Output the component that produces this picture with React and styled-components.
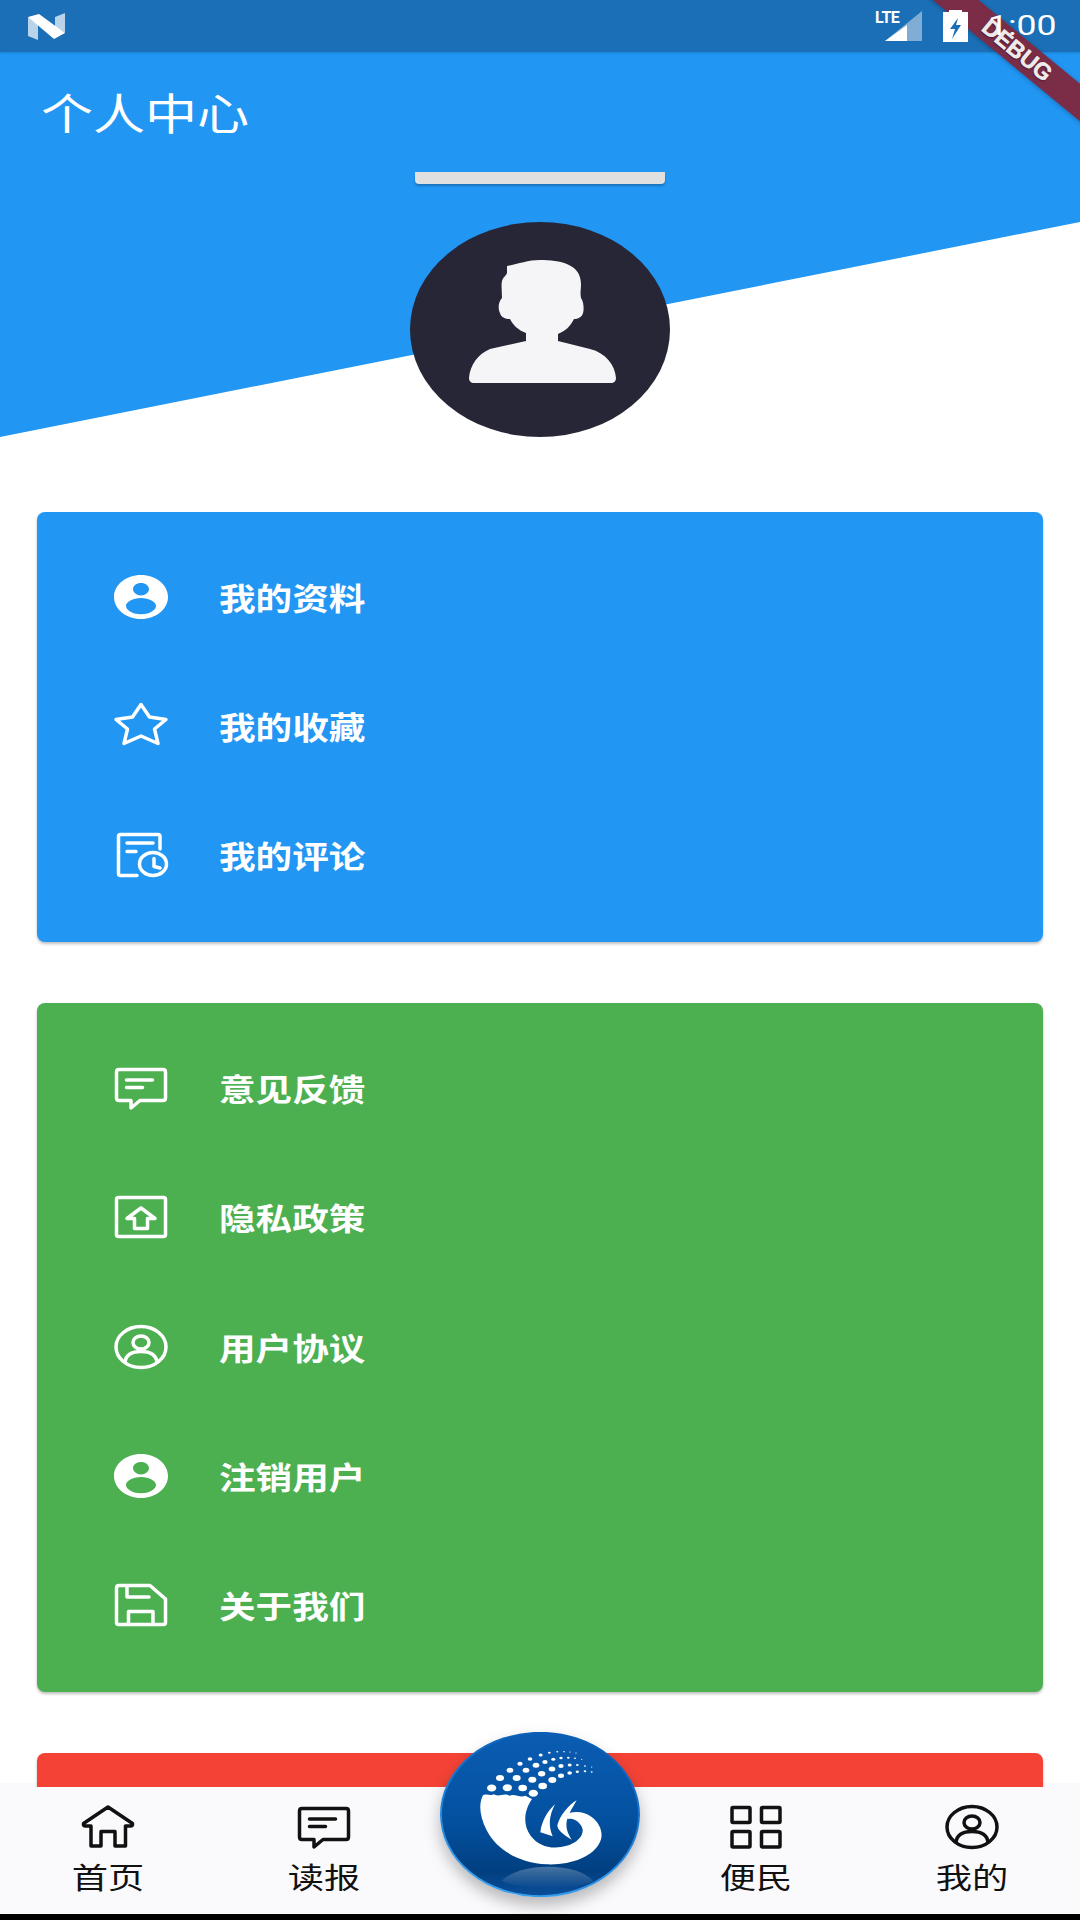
import styled, { createGlobalStyle } from "styled-components";

const CJK = `"Noto Sans CJK SC", "Noto Sans", sans-serif`;

const blueRows = [
  { title: "我的资料", icon: <UserFilled /> },
  { title: "我的收藏", icon: <StarOutline /> },
  { title: "我的评论", icon: <RecordClock /> },
];

const greenRows = [
  { title: "意见反馈", icon: <ChatBox /> },
  { title: "隐私政策", icon: <UploadBox /> },
  { title: "用户协议", icon: <UserOutline /> },
  { title: "注销用户", icon: <UserFilled /> },
  { title: "关于我们", icon: <SaveBox /> },
];

const dotRows = [
  [[215, 233, 14], [262, 232, 14], [308, 233, 13], [340, 249, 14], [368, 227, 13], [397, 209, 12], [423, 196, 9], [449, 188, 7], [472, 184, 5], [495, 183, 4], [515, 185, 3]],
  [[240, 203, 12], [290, 203, 12], [337, 208, 12], [365, 190, 11], [396, 176, 10], [423, 167, 8], [449, 164, 6], [472, 164, 4], [495, 167, 3], [515, 170, 2]],
  [[270, 180, 10], [318, 180, 10], [348, 165, 10], [375, 155, 8], [400, 147, 6], [423, 143, 5], [445, 142, 4], [465, 144, 3], [485, 147, 2]],
  [[300, 160, 8], [330, 146, 7], [362, 134, 6], [388, 127, 4], [412, 124, 3], [432, 124, 2.5], [450, 125, 2], [468, 128, 2]],
];

export default function App() {
  return (
    <Screen>
      <GlobalStyle />
      <Hero>
        <StatusBar>
          <DebugRibbon>
            <span>DEBUG</span>
          </DebugRibbon>
          <NougatLogo />
          <StatusRight>
            <Signal>
              <LteText>LTE</LteText>
              <SignalIcon />
            </Signal>
            <BatteryIcon />
            <Clock>1:00</Clock>
          </StatusRight>
        </StatusBar>
        <TitleRow>
          <Title>个人中心</Title>
        </TitleRow>
        <NameBar />
        <Avatar>
          <Silhouette />
        </Avatar>
      </Hero>

      <Main>
        <Card $color="#2196f3">
          {blueRows.map((row) => (
            <MenuRow key={row.title}>
              {row.icon}
              <MenuText>{row.title}</MenuText>
            </MenuRow>
          ))}
        </Card>
        <Card $color="#4caf50">
          {greenRows.map((row) => (
            <MenuRow key={row.title}>
              {row.icon}
              <MenuText>{row.title}</MenuText>
            </MenuRow>
          ))}
        </Card>
        <Card $color="#f44336" />
      </Main>

      <BottomNav>
        <NavItem>
          <HomeIcon />
          <NavText>首页</NavText>
        </NavItem>
        <NavItem>
          <ChatBox />
          <NavText>读报</NavText>
        </NavItem>
        <span />
        <NavItem>
          <GridIcon />
          <NavText>便民</NavText>
        </NavItem>
        <NavItem>
          <UserOutline />
          <NavText>我的</NavText>
        </NavItem>
      </BottomNav>
      <BlackEdge />

      <LogoButton>
        <PaperLogo />
      </LogoButton>
    </Screen>
  );
}

function Glyph({ children }) {
  return (
    <IconSvg viewBox="0 0 54 44" fill="none" stroke="currentColor" strokeWidth="3.5" strokeLinecap="round" strokeLinejoin="round">
      {children}
    </IconSvg>
  );
}

function UserFilled() {
  return (
    <IconSvg viewBox="0 0 54 44">
      <path
        fill="currentColor"
        fillRule="evenodd"
        d="M27 0C42 0 54 10 54 22S42 44 27 44 0 34 0 22 12 0 27 0ZM27 8C22.600 8 19 10.700 19 14S22.600 20.500 27 20.500 35 17.300 35 14 31.400 8 27 8ZM27 23C18.700 23 12 26.700 12 31.300 12 34 17 39.300 27 39.300S42 34 42 31.300C42 26.700 35.300 23 27 23Z"
      />
    </IconSvg>
  );
}

function StarOutline() {
  return (
    <Glyph>
      <path d="M27 0.500 35.500 13 52 15.500 40.500 25 44 39.500 27 32 10 39.500 13.500 25 2 15.500 18.500 13Z" />
    </Glyph>
  );
}

function RecordClock() {
  return (
    <Glyph>
      <path d="M23 42.500H6.500Q4.500 42.500 4.500 40.500V3.500Q4.500 1.500 6.500 1.500H44Q46 1.500 46 3.500V16" />
      <path d="M13 10H39M13 18.500H22" />
      <ellipse cx="39" cy="31" rx="13.500" ry="11.500" />
      <path d="M40 25.500V33.500L46 35" />
    </Glyph>
  );
}

function ChatBox() {
  return (
    <Glyph>
      <path d="M5 3.500H49Q51.500 3.500 51.500 6V32Q51.500 34.500 49 34.500H26L17 42V34.500H5Q2.500 34.500 2.500 32V6Q2.500 3.500 5 3.500Z" />
      <path d="M12.500 14H38.500M12.500 21.500H28.500" />
    </Glyph>
  );
}

function UploadBox() {
  return (
    <Glyph>
      <rect x="2.500" y="2.500" width="49" height="39" rx="2" />
      <path d="M27 13 13 23.500H20.500V33.500H33.500V23.500H41Z" />
    </Glyph>
  );
}

function UserOutline() {
  return (
    <Glyph>
      <ellipse cx="27" cy="22" rx="25" ry="20.500" />
      <ellipse cx="27" cy="17.500" rx="8" ry="6.500" />
      <path d="M11 37C12 30 18 26.500 27 26.500S42 30 43 37" />
    </Glyph>
  );
}

function SaveBox() {
  return (
    <Glyph>
      <path d="M5 2.500H36L51.500 16V39.500Q51.500 41.500 49.500 41.500H4.500Q2.500 41.500 2.500 39.500V5Q2.500 2.500 5 2.500Z" />
      <path d="M13 3V14H35M14.500 41V28.500H39V41" />
    </Glyph>
  );
}

function HomeIcon() {
  return (
    <Glyph>
      <path d="M27 2 2.500 18.500Q2 21 4.500 21H10V41H20V26.500H34V41H44.500V21H49.500Q52 21 51.500 18.500Z" />
    </Glyph>
  );
}

function GridIcon() {
  return (
    <Glyph>
      <rect x="3" y="2.500" width="18" height="15" rx="1" />
      <rect x="32.500" y="2.500" width="18.500" height="15" rx="1" />
      <rect x="3" y="26.500" width="18" height="15.500" rx="1" />
      <rect x="32.500" y="26.500" width="18.500" height="15.500" rx="1" />
    </Glyph>
  );
}

function NougatLogo() {
  return (
    <LogoSvg viewBox="0 0 37 28">
      <path fill="#b9d4ea" d="M0 5 10 11V28L0 24Z" />
      <path fill="#b9d4ea" d="M27 5 37 1V21L27 15Z" />
      <path fill="#fff" d="M0 5 11 2 37 21 26 27Z" />
    </LogoSvg>
  );
}

function SignalIcon() {
  return (
    <SignalSvg viewBox="0 0 37 30">
      <path fill="#7fadd6" d="M37 0V30H0Z" />
      <path fill="#fff" d="M22 14V30H0Z" />
    </SignalSvg>
  );
}

function BatteryIcon() {
  return (
    <BatterySvg viewBox="0 0 25 32">
      <path fill="#fff" fillRule="evenodd" d="M6 0H19V2H25V32H0V2H6ZM15 8 7 19H12L9 29 18 15H13L15 8Z" />
    </BatterySvg>
  );
}

function Silhouette() {
  return (
    <AvatarSvg viewBox="0 0 260 215">
      <path
        fill="#f5f5f8"
        d="M97 44C108 42 118 38 130 38C150 38 171 42 171 62C171 67 170 71 171 76C174 80 174 88 173 91C172 95 168 97 164 97C160 105 155 109 148 112V119L180 127C196 131 205 143 206 156C206 159 204 161 201 161H64C61 161 59 159 59 156C60 143 68 132 80 127L116 119V111C108 108 103 103 100 97C95 97 91 95 90 91C88 87 88 80 92 76C92 70 91 64 92 59C93 55 96 54 97 51Z"
      />
    </AvatarSvg>
  );
}

function PaperLogo() {
  return (
    <svg viewBox="60 65 600 495" width="200" height="165">
      <defs>
        <linearGradient id="disc" x1="0" y1="0" x2="0" y2="1">
          <stop offset="0" stopColor="#0b5db3" />
          <stop offset="0.55" stopColor="#03509f" />
          <stop offset="0.85" stopColor="#013f80" />
          <stop offset="1" stopColor="#0a4f9a" />
        </linearGradient>
        <linearGradient id="rim" x1="0.6" y1="0" x2="0.3" y2="1">
          <stop offset="0" stopColor="#0b5db3" />
          <stop offset="0.5" stopColor="#1c7fd6" />
          <stop offset="1" stopColor="#3aa0ee" />
        </linearGradient>
        <linearGradient id="glare" x1="0" y1="0" x2="0" y2="1">
          <stop offset="0" stopColor="#fff" stopOpacity="0.28" />
          <stop offset="1" stopColor="#fff" stopOpacity="0" />
        </linearGradient>
      </defs>
      <ellipse cx="360" cy="312.500" rx="297" ry="245" fill="url(#disc)" stroke="url(#rim)" strokeWidth="6" />
      <path d="M245 512C300 455 470 455 520 512C460 540 310 540 245 512Z" fill="url(#glare)" />
      {dotRows.flat().map(([cx, cy, r]) => (
        <ellipse key={`${cx}-${cy}`} cx={cx} cy={cy} rx={r} ry={r * 0.75} fill="#fff" />
      ))}
      <path
        fill="#fff"
        d="M188 256C198 248 212 258 222 252C238 262 250 246 268 256C284 248 300 264 316 256L336 266C314 298 306 340 332 376C358 410 400 420 448 404C470 396 490 378 488 358C486 340 462 320 444 326L432 318C450 300 490 300 515 320C540 338 552 370 540 395C520 440 450 465 380 462C300 458 230 420 200 360C180 320 175 285 188 256Z"
      />
      <path fill="#fff" d="M405 282C385 300 365 330 361 366L398 378C386 350 385 320 405 282Z" />
      <path fill="#fff" d="M470 270C445 285 420 315 412 345C412 358 425 370 455 388C440 365 432 340 448 310C455 295 462 285 470 270Z" />
    </svg>
  );
}

const GlobalStyle = createGlobalStyle`
  html, body {
    margin: 0;
    padding: 0;
    background: #fff;
  }
`;

const Screen = styled.div`
  position: relative;
  display: flex;
  flex-direction: column;
  width: 1080px;
  height: 1920px;
  overflow: hidden;
  font-family: ${CJK};
`;

const Hero = styled.header`
  position: relative;
  display: flex;
  flex-direction: column;
  align-items: center;
  flex: none;
  height: 437px;

  &::before {
    content: "";
    position: absolute;
    inset: 0;
    background: #2196f3;
    clip-path: polygon(0 0, 100% 0, 100% 222px, 0 100%);
  }
`;

const StatusBar = styled.div`
  position: relative;
  display: flex;
  align-items: center;
  justify-content: space-between;
  box-sizing: border-box;
  width: 100%;
  height: 52px;
  padding: 0 22px 0 28px;
  background: #1a6fb6;
  box-shadow: 0 1px 2px rgba(0, 0, 0, 0.15);
`;

const StatusRight = styled.div`
  position: relative;
  display: flex;
  align-items: center;
`;

const Signal = styled.div`
  position: relative;
  width: 47px;
  height: 30px;
  margin-right: 21px;
`;

const LteText = styled.span`
  position: absolute;
  left: 0;
  top: -2px;
  font: 700 16px/18px Roboto, sans-serif;
  letter-spacing: -0.5px;
  color: #fff;
`;

const SignalSvg = styled.svg`
  position: absolute;
  right: 0;
  top: 0;
  width: 37px;
  height: 30px;
`;

const BatterySvg = styled.svg`
  width: 25px;
  height: 32px;
  margin-right: 20px;
`;

const LogoSvg = styled.svg`
  position: relative;
  width: 37px;
  height: 28px;
`;

const Clock = styled.span`
  display: inline-block;
  width: 70px;
  font: 400 28px/32px Roboto, sans-serif;
  color: #fff;
  transform: scaleX(1.27);
  transform-origin: left center;
`;

const TitleRow = styled.div`
  position: relative;
  display: flex;
  align-items: center;
  box-sizing: border-box;
  width: 100%;
  height: 120px;
  padding: 0 0 0 41px;
`;

const Title = styled.h1`
  margin: 0 0 2px;
  font-size: 43px;
  font-weight: 400;
  line-height: 1;
  color: #fff;
  transform: scaleX(1.21);
  transform-origin: left center;
`;

const NameBar = styled.div`
  position: relative;
  width: 250px;
  height: 12px;
  background: #e0e0e0;
  border-radius: 0 0 4px 4px;
  box-shadow: 0 2px 2px rgba(0, 0, 0, 0.22);
`;

const Avatar = styled.div`
  position: relative;
  width: 260px;
  height: 215px;
  margin-top: 38px;
  border-radius: 50%;
  background: #272636;
`;

const AvatarSvg = styled.svg`
  display: block;
  width: 100%;
  height: 100%;
`;

const Main = styled.main`
  display: flex;
  flex-direction: column;
  flex: 1;
  gap: 61px;
  min-height: 0;
  padding: 75px 37px 0;
  overflow: hidden;
  background: linear-gradient(#fff calc(100% - 4px), #fafafc 0);
`;

const Card = styled.section`
  display: flex;
  flex-direction: column;
  flex: none;
  min-height: 300px;
  padding: 22px 0 20px;
  color: #fff;
  background: ${(props) => props.$color};
  border-radius: 8px;
  box-shadow: 0 2px 3px rgba(0, 0, 0, 0.25);
`;

const MenuRow = styled.div`
  display: flex;
  align-items: center;
  height: 129.400px;
  padding-left: 77px;

  svg {
    margin-bottom: 4px;
  }
`;

const IconSvg = styled.svg`
  display: block;
  flex: none;
  width: 54px;
  height: 44px;
  overflow: visible;
`;

const MenuText = styled.span`
  margin: 0 0 5px 51px;
  font-size: 31px;
  font-weight: 700;
  line-height: 1;
  transform: scaleX(1.18);
  transform-origin: left center;
`;

const BottomNav = styled.nav`
  position: relative;
  display: grid;
  grid-template-columns: repeat(5, 1fr);
  flex: none;
  height: 127px;
  color: #111;
  background: #faf9fc;
`;

const NavItem = styled.div`
  display: flex;
  flex-direction: column;
  align-items: center;
  padding-top: 18px;
`;

const NavText = styled.span`
  margin-top: 10px;
  font-size: 29px;
  line-height: 34px;
  transform: scaleX(1.25);
`;

const BlackEdge = styled.div`
  flex: none;
  height: 6px;
  background: #000;
`;

const LogoButton = styled.div`
  position: absolute;
  left: 440px;
  top: 1732px;
  width: 200px;
  height: 165px;
  border-radius: 50%;
  box-shadow: 0 8px 16px rgba(0, 0, 0, 0.28);
`;

const DebugRibbon = styled.div`
  position: absolute;
  left: 867px;
  top: 36px;
  display: flex;
  align-items: center;
  justify-content: center;
  width: 300px;
  height: 29px;
  color: rgba(255, 255, 255, 0.92);
  background: #7b2d47;
  box-shadow: 0 1px 4px rgba(0, 0, 0, 0.25);
  transform: rotate(39.500deg);
  font: 700 23px/29px "Liberation Sans", sans-serif;
  text-shadow: 0 1px 2px rgba(0, 0, 0, 0.5);
  -webkit-text-stroke: 0.5px rgba(255, 255, 255, 0.92);
`;
